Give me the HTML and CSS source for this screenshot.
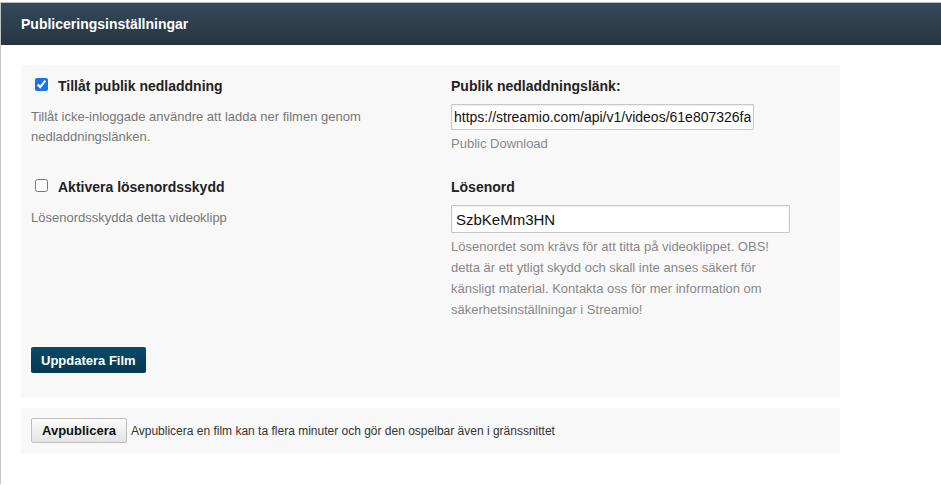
FILE: index.html
```html
<html>
  <head>
    <title>Publiceringsinställningar</title>
    <link rel="stylesheet" href="styles.css">
  </head>
<body>
  <div class="frame">
    <h2 class="header">Publiceringsinställningar</h2>

    <div class="content">
      <form class="panel">
        <div class="row">
          <div class="cell">
            <label class="heading check"><input type="checkbox" checked> Tillåt publik nedladdning</label>
            <p class="desc">Tillåt icke-inloggade användre att ladda ner filmen genom nedladdningslänken.</p>
          </div>
          <div class="cell">
            <label class="heading">Publik nedladdningslänk:</label>
            <input class="url" type="text" value="https://streamio.com/api/v1/videos/61e807326fa4c3b1f2000012/public_download">
            <p class="hint">Public Download</p>
          </div>
        </div>

        <div class="row">
          <div class="cell">
            <label class="heading check"><input type="checkbox"> Aktivera lösenordsskydd</label>
            <p class="desc">Lösenordsskydda detta videoklipp</p>
          </div>
          <div class="cell">
            <label class="heading">Lösenord</label>
            <input class="password" type="text" value="SzbKeMm3HN">
            <p class="hint help">Lösenordet som krävs för att titta på videoklippet. OBS! detta är ett ytligt skydd och skall inte anses säkert för känsligt material. Kontakta oss för mer information om säkerhetsinställningar i Streamio!</p>
          </div>
        </div>

        <button type="button" class="primary">Uppdatera Film</button>
      </form>

      <div class="panel unpublish">
        <button type="button" class="plain">Avpublicera</button>
        <span>Avpublicera en film kan ta flera minuter och gör den ospelbar även i gränssnittet</span>
      </div>
    </div>
  </div>
</body>
</html>
```

FILE: styles.css
```css
html, body { margin:0; padding:0; background:#fff; }
body { font-family:"Liberation Sans", Arial, sans-serif; color:#222; }

.frame { margin-top:2px; border-top:1px solid #bcbcbc; border-left:1px solid #c4c4c4;
         min-height:calc(100vh - 3px); box-sizing:border-box; }

.header { margin:0; height:42px; padding-left:20px; display:flex; align-items:center;
          font-size:14px; font-weight:bold; color:#fff;
          background:linear-gradient(#34495b, #263440); }

.content { padding:20px 0 0 20px; }

.panel { width:819px; box-sizing:border-box; background:#f8f8f8; margin:0; }
form.panel { padding:11px 10px 25px; }

.row { display:grid; grid-template-columns:420px 1fr; }
.row + .row { margin-top:23px; }

.heading { display:block; font-size:14px; font-weight:bold; line-height:20px; color:#222; }
.check { display:flex; align-items:flex-start; }
.check input { margin:2px 10px 0 4px; width:13px; height:13px; accent-color:#1a73e8; }

.desc { margin:11px 0 0; max-width:360px; font-size:13px; line-height:20px; color:#777; }

.url, .password { display:block; box-sizing:border-box; font-family:"Liberation Sans", Arial, sans-serif;
                  color:#111; background:#fff; border:1px solid #c6c6c6; border-radius:1px;
                  box-shadow:inset 0 1px 2px rgba(0,0,0,0.08); outline:none; }
.url { width:303px; height:26px; margin-top:8px; padding:0 2px; font-size:14px; }
.password { width:339px; height:28px; margin-top:8px; padding:0 4px; font-size:15px; }

.hint { margin:4px 0 0; font-size:13px; line-height:20px; color:#888; }
.help { margin-top:3px; max-width:345px; line-height:21px; }

.primary { display:block; margin-top:27px; height:26px; padding:0 10px; border:0; border-radius:2px;
           background:linear-gradient(#0a4a66, #033a54); color:#fff;
           font-family:"Liberation Sans", Arial, sans-serif; font-size:13px; font-weight:bold; }

.unpublish { margin-top:10px; padding:10px 10px 11px; display:flex; align-items:center;
             font-size:12px; color:#333; }
.plain { height:25px; padding:0 10px; margin-right:4px; border:1px solid #bdbdbd; border-radius:2px;
         background:linear-gradient(#fbfbfb, #e4e4e4); color:#111;
         font-family:"Liberation Sans", Arial, sans-serif; font-size:13px; font-weight:bold; }
```
